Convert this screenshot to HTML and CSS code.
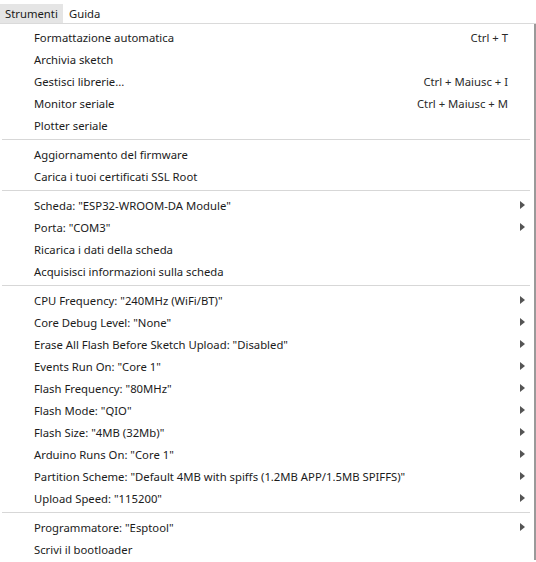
FILE: index.html
```html
<!DOCTYPE html>
<html>
<head>
<meta charset="utf-8">
<link rel="stylesheet" href="styles.css">
</head>
<body>
<div class="menubar">
  <div class="top active">Strumenti</div>
  <div class="top">Guida</div>
</div>
<div class="menu">
  <div class="item"><span class="label">Formattazione automatica</span><span class="key">Ctrl + T</span></div>
  <div class="item"><span class="label">Archivia sketch</span></div>
  <div class="item"><span class="label">Gestisci librerie...</span><span class="key">Ctrl + Maiusc + I</span></div>
  <div class="item"><span class="label">Monitor seriale</span><span class="key">Ctrl + Maiusc + M</span></div>
  <div class="item"><span class="label">Plotter seriale</span></div>
  <div class="sep"></div>
  <div class="item"><span class="label">Aggiornamento del firmware</span></div>
  <div class="item"><span class="label">Carica i tuoi certificati SSL Root</span></div>
  <div class="sep"></div>
  <div class="item sub"><span class="label">Scheda: "ESP32-WROOM-DA Module"</span></div>
  <div class="item sub"><span class="label">Porta: "COM3"</span></div>
  <div class="item"><span class="label">Ricarica i dati della scheda</span></div>
  <div class="item"><span class="label">Acquisisci informazioni sulla scheda</span></div>
  <div class="sep"></div>
  <div class="item sub"><span class="label">CPU Frequency: "240MHz (WiFi/BT)"</span></div>
  <div class="item sub"><span class="label">Core Debug Level: "None"</span></div>
  <div class="item sub"><span class="label">Erase All Flash Before Sketch Upload: "Disabled"</span></div>
  <div class="item sub"><span class="label">Events Run On: "Core 1"</span></div>
  <div class="item sub"><span class="label">Flash Frequency: "80MHz"</span></div>
  <div class="item sub"><span class="label">Flash Mode: "QIO"</span></div>
  <div class="item sub"><span class="label">Flash Size: "4MB (32Mb)"</span></div>
  <div class="item sub"><span class="label">Arduino Runs On: "Core 1"</span></div>
  <div class="item sub"><span class="label">Partition Scheme: "Default 4MB with spiffs (1.2MB APP/1.5MB SPIFFS)"</span></div>
  <div class="item sub"><span class="label">Upload Speed: "115200"</span></div>
  <div class="sep"></div>
  <div class="item sub"><span class="label">Programmatore: "Esptool"</span></div>
  <div class="item"><span class="label">Scrivi il bootloader</span></div>
</div>
</body>
</html>
```
FILE: styles.css
```css
html, body {
  margin: 0;
  padding: 0;
  background: #ffffff;
}
body {
  font-family: "Noto Sans", "Open Sans", sans-serif;
  font-size: 11.3px;
  color: #1b1b1b;
  width: 536px;
  height: 562px;
  overflow: hidden;
}
.menubar {
  display: flex;
  padding-top: 4px;
  height: 19px;
  border-bottom: 1px solid #dadada;
}
.top {
  padding: 0 6px 0 5px;
  line-height: 19px;
}
.active {
  background: #e5e5e5;
  width: 52px;
}
.top + .top {
  padding-left: 6px;
}
.menu {
  padding-top: 2px;
  border-right: 2px solid #9a9a9a;
  width: 534px;
}
.item {
  display: flex;
  align-items: center;
  height: 22px;
  padding-left: 34px;
  padding-right: 26px;
  position: relative;
}
.label {
  flex: 1;
  white-space: nowrap;
}
.key {
  color: #2a2a2a;
}
.sub::after {
  content: "";
  position: absolute;
  left: 520px;
  top: 7px;
  border-left: 5px solid #555555;
  border-top: 4px solid transparent;
  border-bottom: 4px solid transparent;
}
.sep {
  height: 7px;
  display: flex;
  align-items: center;
  padding: 0 4px 0 2px;
}
.sep::before {
  content: "";
  flex: 1;
  height: 1px;
  background: #d7d7d7;
}
```
